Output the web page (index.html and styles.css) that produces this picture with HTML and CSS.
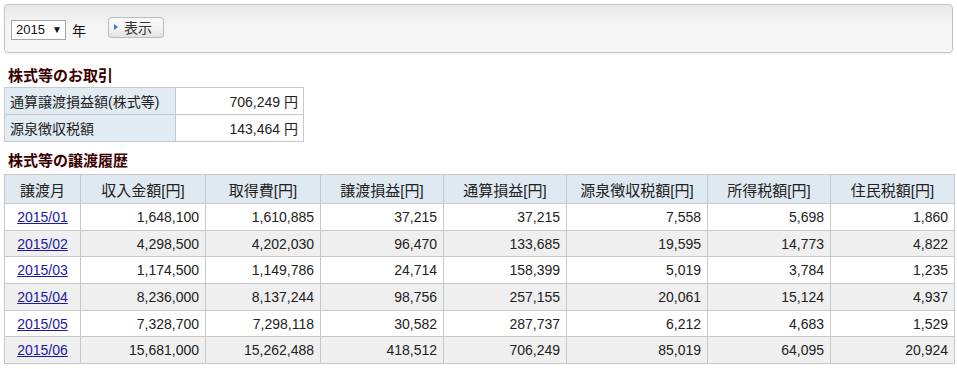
FILE: index.html
```html
<!DOCTYPE html>
<html lang="ja">
<head>
<meta charset="utf-8">
<link rel="stylesheet" href="styles.css">
</head>
<body>
<div class="panel">
  <span class="select">2015 <span class="arrow">▼</span></span>
  <span class="year">年</span>
  <span class="btn"><span class="tri"></span>表示</span>
</div>

<h2 class="heading h1">株式等のお取引</h2>
<table class="summary">
  <tr><th>通算譲渡損益額(株式等)</th><td>706,249 円</td></tr>
  <tr><th>源泉徴収税額</th><td>143,464 円</td></tr>
</table>

<h2 class="heading h2">株式等の譲渡履歴</h2>
<table class="history">
  <colgroup>
    <col class="c1"><col class="c2"><col class="c3"><col class="c4"><col class="c5"><col class="c6"><col class="c7"><col class="c8">
  </colgroup>
  <tr><th>譲渡月</th><th>収入金額[円]</th><th>取得費[円]</th><th>譲渡損益[円]</th><th>通算損益[円]</th><th>源泉徴収税額[円]</th><th>所得税額[円]</th><th>住民税額[円]</th></tr>
  <tr><td class="m"><a href="#">2015/01</a></td><td>1,648,100</td><td>1,610,885</td><td>37,215</td><td>37,215</td><td>7,558</td><td>5,698</td><td>1,860</td></tr>
  <tr class="alt"><td class="m"><a href="#">2015/02</a></td><td>4,298,500</td><td>4,202,030</td><td>96,470</td><td>133,685</td><td>19,595</td><td>14,773</td><td>4,822</td></tr>
  <tr><td class="m"><a href="#">2015/03</a></td><td>1,174,500</td><td>1,149,786</td><td>24,714</td><td>158,399</td><td>5,019</td><td>3,784</td><td>1,235</td></tr>
  <tr class="alt"><td class="m"><a href="#">2015/04</a></td><td>8,236,000</td><td>8,137,244</td><td>98,756</td><td>257,155</td><td>20,061</td><td>15,124</td><td>4,937</td></tr>
  <tr><td class="m"><a href="#">2015/05</a></td><td>7,328,700</td><td>7,298,118</td><td>30,582</td><td>287,737</td><td>6,212</td><td>4,683</td><td>1,529</td></tr>
  <tr class="alt"><td class="m"><a href="#">2015/06</a></td><td>15,681,000</td><td>15,262,488</td><td>418,512</td><td>706,249</td><td>85,019</td><td>64,095</td><td>20,924</td></tr>
</table>
</body>
</html>
```

FILE: styles.css
```css
html, body {
  margin: 0;
  padding: 0;
  background: #fff;
}
body {
  padding: 4px 4px 0 4px;
  font-family: "Liberation Sans", "Noto Sans CJK JP", sans-serif;
  font-size: 14px;
  color: #222;
}
.panel {
  box-sizing: border-box;
  width: 949px;
  height: 49px;
  border: 1px solid #c4c4c4;
  border-radius: 4px;
  background: linear-gradient(#e8e8e8, #f5f5f5 45%, #f5f5f5);
  box-shadow: 0 1px 2px rgba(0,0,0,0.08);
  display: flex;
  align-items: center;
  padding: 2px 0 0 6px;
}
.select {
  box-sizing: border-box;
  display: inline-flex;
  align-items: center;
  width: 55px;
  height: 20px;
  border: 1px solid #a5a5a5;
  background: #fff;
  padding-left: 4px;
  font-size: 13px;
  color: #111;
}
.arrow {
  font-size: 10px;
  margin-left: 7px;
}
.year {
  margin-left: 6px;
  color: #111;
  font-size: 14px;
}
.btn {
  box-sizing: border-box;
  margin-left: 22px;
  margin-top: -5px;
  display: inline-flex;
  align-items: center;
  width: 56px;
  height: 21px;
  border: 1px solid #bdbdbd;
  border-radius: 3px;
  background: linear-gradient(#fafafa, #f2f2f2 60%, #e2e2e2);
  color: #333;
  padding-left: 5px;
  font-size: 14px;
}
.tri {
  display: inline-block;
  width: 0;
  height: 0;
  border-left: 4px solid #3a7bd5;
  border-top: 3px solid transparent;
  border-bottom: 3px solid transparent;
  margin-right: 6px;
}
.heading {
  margin: 0;
  font-size: 15px;
  font-weight: bold;
  color: #3a0000;
  line-height: 18px;
  padding-left: 4px;
}
.h1 { margin-top: 14px; }
.h2 { margin-top: 10px; }
table {
  border-collapse: collapse;
  font-size: 14px;
}
.summary {
  margin-top: 2px;
  width: 300px;
}
.summary th, .summary td {
  border: 1px solid #c8c8c8;
  height: 26px;
  padding: 0 5px;
  font-weight: normal;
}
.summary th {
  width: 160px;
  text-align: left;
  background: #e1ebf3;
  color: #222;
}
.summary td {
  text-align: right;
  color: #222;
}
.history {
  margin-top: 4px;
  width: 950px;
  table-layout: fixed;
}
.c1 { width: 76px; }
.c2 { width: 125px; }
.c3 { width: 115px; }
.c4 { width: 123px; }
.c5 { width: 123px; }
.c6 { width: 141px; }
.c7 { width: 123px; }
.c8 { width: 124px; }
.history th, .history td {
  border: 1px solid #c8c8c8;
  padding: 0 6px;
}
.history th {
  height: 28px;
  background: #dfe9f1;
  font-weight: normal;
  color: #222;
  text-align: center;
  font-size: 15px;
}
.history td {
  height: 25.7px;
  text-align: right;
  color: #222;
}
.history td.m {
  text-align: center;
}
.history tr.alt td {
  background: #efefef;
}
.history a {
  color: #1a1aa6;
  text-decoration: underline;
}
```
